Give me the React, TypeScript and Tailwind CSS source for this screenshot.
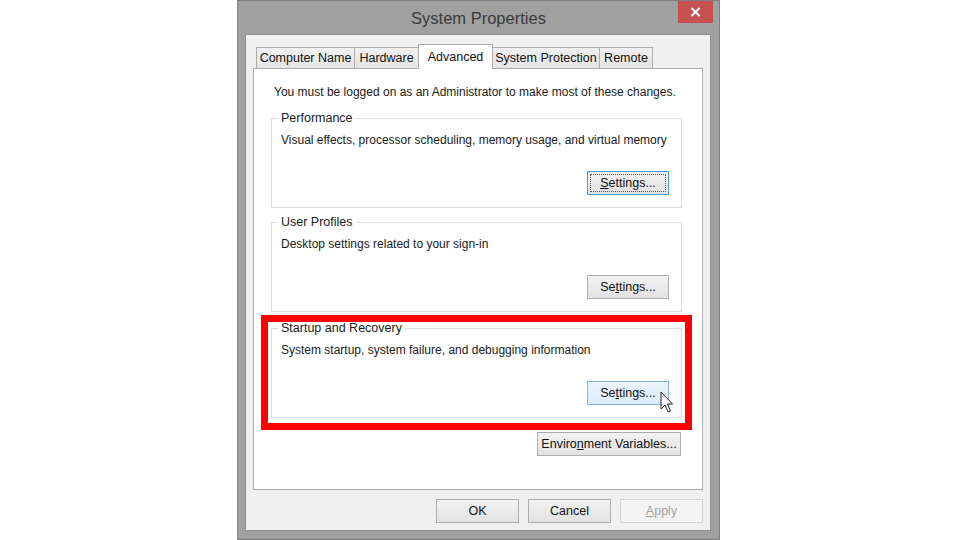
import { FC, ReactNode } from "react";

const font = { fontFamily: '"Liberation Sans", Arial, sans-serif' };

type BtnKind = "normal" | "focused" | "hover" | "disabled";

const Button: FC<{ kind?: BtnKind; className?: string; children: ReactNode }> = ({
    kind = "normal",
    className = "",
    children,
}) => {
    const look =
        kind === "focused"
            ? "border-[#4a9be6] bg-gradient-to-b from-[#f2f2f2] to-[#e2e2e2] text-[#111]"
            : kind === "hover"
            ? "border-[#7eb4ea] bg-gradient-to-b from-[#ecf4fc] to-[#dcecfc] text-[#111]"
            : kind === "disabled"
            ? "border-[#d2d2d2] bg-[#f4f4f4] text-[#a3a3a3]"
            : "border-[#adadad] bg-gradient-to-b from-[#f2f2f2] to-[#e2e2e2] text-[#111]";
    return (
        <div
            className={`relative h-[24px] border flex items-center justify-center text-[12.5px] ${look} ${className}`}
        >
            {kind === "focused" && (
                <div className="absolute inset-[2px] border border-dotted border-[#555]" />
            )}
            <span className="relative">{children}</span>
        </div>
    );
};

const GroupBox: FC<{ title: string; text: string; className?: string; children: ReactNode }> = ({
    title,
    text,
    className = "",
    children,
}) => {
    return (
        <div className={`h-[90px] border border-[#dcdcdc] flex flex-col ${className}`}>
            <span className="-mt-[9px] ml-[6px] px-[3px] bg-white w-fit leading-[16px] text-[12.5px] text-[#1a1a1a]">
                {title}
            </span>
            <p className="mt-[6px] ml-[9px] leading-[16px] text-[12px] text-[#1a1a1a]">{text}</p>
            <div className="mt-auto mb-[12px] mr-[12px] flex justify-end">{children}</div>
        </div>
    );
};

const tabs = ["Computer Name", "Hardware", "Advanced", "System Protection", "Remote"];
const tabWidths = ["w-[99px]", "w-[65px]", "w-[75px]", "w-[108px]", "w-[54px]"];

const App: FC = () => {
    return (
        <div className="w-[960px] h-[540px] bg-white overflow-hidden pl-[237px]" style={font}>
            <div className="w-[483px] h-[540px] bg-[#a0a0a0] border border-[#7d7d7d] flex flex-col">
                {/* title bar */}
                <div className="relative h-[33px] flex items-center justify-center">
                    <span className="text-[16.5px] text-[#3a3a3a] mt-[1px]">System Properties</span>
                    <div className="absolute right-[6px] top-0 w-[35px] h-[22px] bg-[#c75050] flex items-center justify-center">
                        <svg width="11" height="10" viewBox="0 0 11 10">
                            <path d="M1.5 1 L9.5 9 M9.5 1 L1.5 9" stroke="#fff" strokeWidth="2" />
                        </svg>
                    </div>
                </div>

                {/* client area */}
                <div className="ml-[7px] mr-[8px] h-[497px] bg-[#f0f0f0] border border-[#8f8f8f] flex flex-col px-[7px] pt-[8px]">
                    {/* tab strip */}
                    <div className="flex items-end h-[25px] pl-[3px] relative z-10">
                        {tabs.map((t, i) =>
                            t === "Advanced" ? (
                                <div
                                    key={t}
                                    className={`${tabWidths[i]} -ml-px h-[25px] -mb-px bg-white border border-b-0 border-[#acacac] flex items-start justify-center pt-[3px] text-[12.5px] text-[#111] relative z-10`}
                                >
                                    {t}
                                </div>
                            ) : (
                                <div
                                    key={t}
                                    className={`${tabWidths[i]} ${i > 0 ? "-ml-px" : ""} h-[21px] bg-gradient-to-b from-[#f0f0f0] to-[#e5e5e5] border border-b-0 border-[#acacac] flex items-center justify-center pt-[1px] text-[12.5px] text-[#111]`}
                                >
                                    {t}
                                </div>
                            )
                        )}
                    </div>

                    {/* tab panel */}
                    <div className="relative h-[422px] bg-white border border-[#acacac] flex flex-col pl-[17px] pr-[20px] pt-[15px]">
                        <p className="ml-[3px] leading-[16px] text-[12px] text-[#1a1a1a] whitespace-nowrap">
                            You must be logged on as an Administrator to make most of these changes.
                        </p>

                        <GroupBox
                            className="mt-[18px]"
                            title="Performance"
                            text="Visual effects, processor scheduling, memory usage, and virtual memory"
                        >
                            <Button kind="focused" className="w-[82px]">
                                <u>S</u>ettings...
                            </Button>
                        </GroupBox>

                        <GroupBox
                            className="mt-[14px]"
                            title="User Profiles"
                            text="Desktop settings related to your sign-in"
                        >
                            <Button className="w-[82px]">
                                Se<u>t</u>tings...
                            </Button>
                        </GroupBox>

                        <div className="relative mt-[16px]">
                            <GroupBox
                                title="Startup and Recovery"
                                text="System startup, system failure, and debugging information"
                            >
                                <Button kind="hover" className="w-[82px]">
                                    Se<u>t</u>tings...
                                </Button>
                            </GroupBox>
                            {/* red highlight annotation */}
                            <div className="absolute -left-[10px] -right-[10px] -top-[13px] -bottom-[12px] border-[7px] border-[#ff0000] pointer-events-none" />
                            {/* mouse cursor */}
                            <svg
                                className="absolute left-[389px] top-[63px]"
                                width="14"
                                height="23"
                                viewBox="0 0 14 23"
                            >
                                <path
                                    d="M1 1 L1 18 L5 14 L8 21 L10.5 20 L7.5 13 L12.5 13 Z"
                                    fill="#fff"
                                    stroke="#222"
                                    strokeWidth="1"
                                    strokeLinejoin="miter"
                                />
                            </svg>
                        </div>

                        <div className="mt-[14px] flex justify-end mr-[1px]">
                            <Button className="w-[144px]">
                                Enviro<u>n</u>ment Variables...
                            </Button>
                        </div>
                    </div>

                    {/* dialog buttons */}
                    <div className="mt-[9px] flex justify-end gap-[9px]">
                        <Button className="w-[83px]">OK</Button>
                        <Button className="w-[83px]">Cancel</Button>
                        <Button kind="disabled" className="w-[83px]">
                            <u>A</u>pply
                        </Button>
                    </div>
                </div>
            </div>
        </div>
    );
};

export default App;
